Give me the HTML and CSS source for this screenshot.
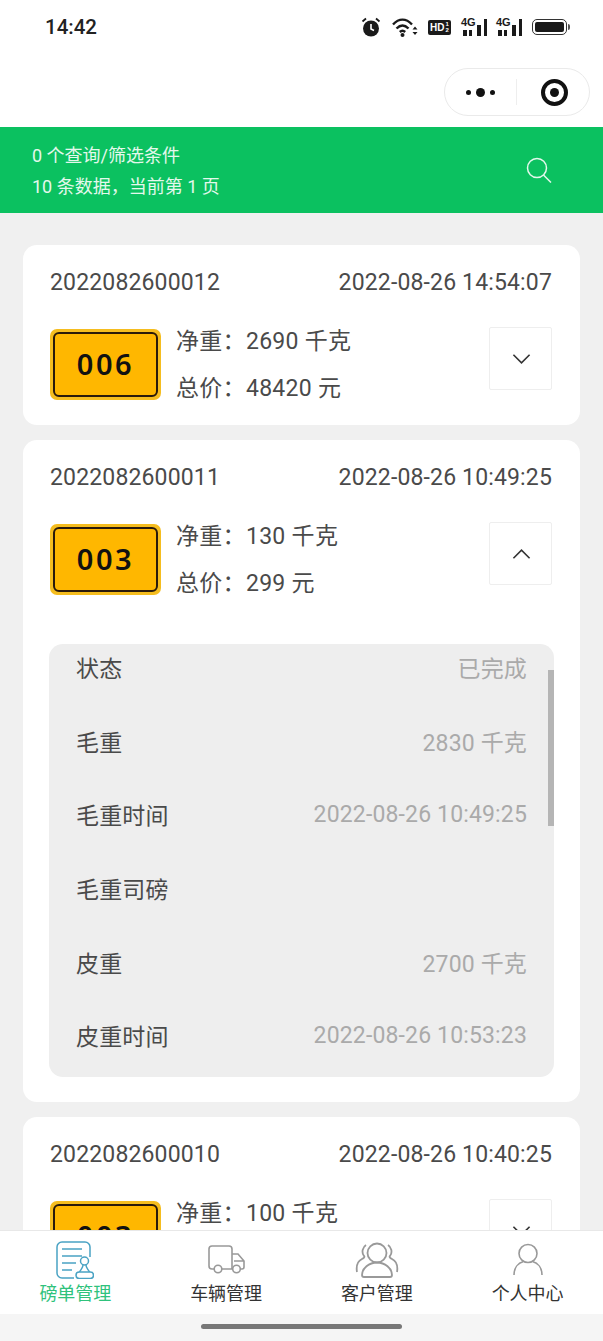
FILE: index.html
```html
<!DOCTYPE html>
<html lang="zh-CN">
<head>
    <meta charset="UTF-8">
    <meta name="viewport" content="width=device-width, initial-scale=1.0">
    <title>磅单管理</title>
    <link rel="stylesheet" href="styles.css">
</head>
<body>
<div class="app">
    <div class="status-bar">
        <span class="clock">14:42</span>
        <div class="status-icons">
            <svg class="ic-alarm" viewBox="0 0 20 20"><circle cx="10" cy="11.500" r="8" fill="#1a1a1a"/><path d="M10 7v5l3 1.500" stroke="#fff" stroke-width="1.600" fill="none"/><path d="M1.500 4.500 5 1.500M18.500 4.500 15 1.500" stroke="#1a1a1a" stroke-width="1.800"/></svg>
            <svg class="ic-wifi" viewBox="0 0 26 20"><g fill="none" stroke="#1a1a1a" stroke-width="2.400"><path d="M1 7.500c6-6.500 13-6.500 19 0"/><path d="M4.500 11.500c4-4 8-4 12 0"/><path d="M7.800 15c2-1.800 3.400-1.800 5.400 0"/></g><circle cx="10.500" cy="18" r="2" fill="#1a1a1a"/><path d="M20.500 12.500h5l-2.500-3zM20.500 15h5l-2.500 3z" fill="#1a1a1a"/></svg>
            <span class="ic-hd">HD<span class="hd-frac">1<br>2</span></span>
            <div class="signal"><em>4G</em><i class="b1"></i><i class="b2"></i><i class="b3"></i><i class="b4"></i></div>
            <div class="signal"><em>4G</em><i class="b1"></i><i class="b2"></i><i class="b3"></i><i class="b4"></i></div>
            <div class="battery"><b></b></div>
            <div class="battery-tip"></div>
        </div>
    </div>

    <div class="nav-bar">
        <div class="capsule">
            <div class="capsule-dots"><i></i><i class="big"></i><i></i></div>
            <div class="capsule-line"></div>
            <div class="capsule-target"><i></i></div>
        </div>
    </div>

    <div class="filter-bar">
        <div class="filter-text">
            <p>0 个查询/筛选条件</p>
            <p>10 条数据，当前第 1 页</p>
        </div>
        <svg class="ic-search" viewBox="0 0 26 26"><circle cx="11" cy="11" r="9.500" fill="none" stroke="#e4f8ec" stroke-width="1.500"/><path d="M17.500 18 25 25.500" stroke="#e4f8ec" stroke-width="1.500"/></svg>
    </div>

    <div class="list">
        <div class="card">
            <div class="card-head"><span>2022082600012</span><span>2022-08-26 14:54:07</span></div>
            <div class="card-body">
                <div class="plate"><div class="plate-inner">006</div></div>
                <div class="weights">
                    <p>净重：2690 千克</p>
                    <p>总价：48420 元</p>
                </div>
                <div class="toggle"><svg viewBox="0 0 20 12"><path d="M1.500 1.500 10 10l8.500-8.500" fill="none" stroke="#333" stroke-width="1.700"/></svg></div>
            </div>
        </div>

        <div class="card">
            <div class="card-head"><span>2022082600011</span><span>2022-08-26 10:49:25</span></div>
            <div class="card-body">
                <div class="plate"><div class="plate-inner">003</div></div>
                <div class="weights">
                    <p>净重：130 千克</p>
                    <p>总价：299 元</p>
                </div>
                <div class="toggle"><svg viewBox="0 0 20 12"><path d="M1.500 10.500 10 2l8.500 8.500" fill="none" stroke="#333" stroke-width="1.700"/></svg></div>
            </div>
            <div class="detail">
                <div class="detail-rows">
                    <div class="row"><span>状态</span><span class="val">已完成</span></div>
                    <div class="row"><span>毛重</span><span class="val">2830 千克</span></div>
                    <div class="row"><span>毛重时间</span><span class="val">2022-08-26 10:49:25</span></div>
                    <div class="row"><span>毛重司磅</span><span class="val"></span></div>
                    <div class="row"><span>皮重</span><span class="val">2700 千克</span></div>
                    <div class="row"><span>皮重时间</span><span class="val">2022-08-26 10:53:23</span></div>
                </div>
                <div class="scroll-thumb"></div>
            </div>
        </div>

        <div class="card">
            <div class="card-head"><span>2022082600010</span><span>2022-08-26 10:40:25</span></div>
            <div class="card-body">
                <div class="plate"><div class="plate-inner">003</div></div>
                <div class="weights">
                    <p>净重：100 千克</p>
                </div>
                <div class="toggle"><svg viewBox="0 0 20 12"><path d="M1.500 1.500 10 10l8.500-8.500" fill="none" stroke="#333" stroke-width="1.700"/></svg></div>
            </div>
        </div>
    </div>

    <div class="tabbar">
        <div class="tab active">
            <svg viewBox="0 0 38 38"><g fill="none" stroke="#4aa3c4" stroke-width="1.500"><path d="M18 37H6a5 5 0 0 1-5-5V6a5 5 0 0 1 5-5h23a5 5 0 0 1 5 5v10"/><path d="M6 8h20M6 15h20M6 22h14M6 29h10"/><circle cx="28.500" cy="20" r="4"/><path d="M27 24c0 3-2 4-3.500 7M30 24c0 3 2 4 3.500 7"/><rect x="20" y="31" width="17.500" height="6.500" rx="3.200"/></g></svg>
            <span>磅单管理</span>
        </div>
        <div class="tab">
            <svg viewBox="0 0 38 38"><g fill="none" stroke="#999" stroke-width="1.600"><path d="M7 28H5a3 3 0 0 1-3-3V8a3 3 0 0 1 3-3h17a3 3 0 0 1 3 3v20H15"/><path d="M25 13h6l6 7v6a2 2 0 0 1-2 2h-2M25 28h1M27 20h10"/><circle cx="11" cy="28" r="3.800"/><circle cx="29.500" cy="28" r="3.800"/></g></svg>
            <span>车辆管理</span>
        </div>
        <div class="tab">
            <svg class="wide" viewBox="0 0 44 38"><g fill="none" stroke="#999" stroke-width="1.800"><circle cx="22" cy="12" r="9.500"/><path d="M22 21.500c-8 0-15 6-15 12.500q0 2 2 2h26q2 0 2-2c0-6.500-7-12.500-15-12.500z"/><path d="M11 4c-3 2-5 7-2 11 1 1 0 2-2 3-4 2-6 7-5 13"/><path d="M33 4c3 2 5 7 2 11-1 1 0 2 2 3 4 2 6 7 5 13"/></g></svg>
            <span>客户管理</span>
        </div>
        <div class="tab">
            <svg viewBox="0 0 38 38"><g fill="none" stroke="#999" stroke-width="1.600"><circle cx="19" cy="12.500" r="9"/><path d="M5 34c0-7 4-12 9.500-13.500M33 34c0-7-4-12-9.500-13.500"/></g></svg>
            <span>个人中心</span>
        </div>
    </div>

    <div class="home-area"><div class="home-bar"></div></div>
</div>
</body>
</html>
```

FILE: styles.css
```css
* {
    box-sizing: border-box;
}
html, body {
    margin: 0;
    padding: 0;
}
body {
    font-family: Roboto, "Noto Sans CJK SC", sans-serif;
    color: #4a4a4a;
    background-color: #f0f0f0;
}
p {
    margin: 0;
}
.app {
    width: 603px;
    height: 1341px;
    display: flex;
    flex-direction: column;
    overflow: hidden;
}

/* status bar */
.status-bar {
    height: 54px;
    flex: none;
    background-color: #fff;
    display: flex;
    justify-content: space-between;
    align-items: center;
    padding: 0 33px 0 45px;
}
.clock {
    font-size: 20.500px;
    font-weight: 500;
    color: #222;
}
.status-icons {
    display: flex;
    align-items: center;
}
.ic-alarm {
    width: 20px;
    height: 20px;
    margin-right: 11px;
}
.ic-wifi {
    width: 26px;
    height: 20px;
    margin-right: 10px;
}
.ic-hd {
    width: 23px;
    height: 15px;
    margin-right: 10px;
    background-color: #1a1a1a;
    border-radius: 2px;
    color: #fff;
    font: bold 10px/15px "Liberation Sans", sans-serif;
    display: flex;
    justify-content: center;
}
.hd-frac {
    font-size: 6px;
    line-height: 6.500px;
    margin-left: 1px;
    padding-top: 1px;
}
.signal {
    width: 27px;
    height: 18px;
    margin-right: 8px;
    display: flex;
    align-items: flex-end;
    position: relative;
}
.signal em {
    position: absolute;
    left: 0;
    top: -1px;
    font: bold 11px/10px "Liberation Sans Narrow", "Liberation Sans", sans-serif;
    color: #1a1a1a;
}
.signal i {
    width: 3.500px;
    background-color: #1a1a1a;
}
.signal .b1 { height: 6px; margin-left: 2px; }
.signal .b2 { height: 6px; margin-left: 2px; }
.signal .b3 { height: 11px; margin-left: 5px; }
.signal .b4 { height: 17px; margin-left: 3px; }
.battery {
    width: 35px;
    height: 16px;
    border: 1.500px solid #333;
    border-radius: 5px;
    padding: 2px;
    margin-left: 1px;
}
.battery b {
    display: block;
    height: 100%;
    background-color: #1a1a1a;
    border-radius: 2px;
}
.battery-tip {
    width: 2px;
    height: 6px;
    margin-left: 1px;
    background-color: #555;
    border-radius: 0 2px 2px 0;
}

/* capsule */
.nav-bar {
    height: 73px;
    flex: none;
    background-color: #fff;
    display: flex;
    justify-content: flex-end;
    padding: 14px 13px 0 0;
}
.capsule {
    width: 146px;
    height: 48px;
    border: 1px solid #eaeaea;
    border-radius: 24px;
    display: flex;
    align-items: center;
}
.capsule-dots {
    width: 71px;
    display: flex;
    justify-content: center;
    align-items: center;
    gap: 5px;
}
.capsule-dots i {
    width: 5px;
    height: 5px;
    border-radius: 50%;
    background-color: #111;
}
.capsule-dots .big {
    width: 9px;
    height: 9px;
}
.capsule-line {
    width: 1px;
    height: 26px;
    background-color: #eee;
}
.capsule-target {
    width: 27px;
    height: 27px;
    margin-left: 24px;
    border: 4px solid #111;
    border-radius: 50%;
    display: flex;
    justify-content: center;
    align-items: center;
}
.capsule-target i {
    width: 9px;
    height: 9px;
    border-radius: 50%;
    background-color: #111;
}

/* green filter bar */
.filter-bar {
    height: 86px;
    flex: none;
    background-color: #0bc160;
    display: flex;
    justify-content: space-between;
    align-items: center;
    padding: 2px 51px 0 32px;
    color: #e4f8ec;
    font-size: 18px;
    line-height: 31px;
}
.ic-search {
    width: 26px;
    height: 26px;
    margin-top: -2px;
}

/* cards */
.list {
    flex: 1;
    min-height: 0;
    overflow: hidden;
    padding: 32px 23px 0;
}
.card {
    background-color: #fff;
    border-radius: 14px;
    padding: 21px 28px 14px 27px;
    margin-bottom: 15px;
}
.card-head {
    display: flex;
    justify-content: space-between;
    padding-top: 1px;
    height: 32px;
    font-size: 23px;
    line-height: 32px;
    letter-spacing: 0.150px;
}
.card-body {
    display: flex;
    align-items: center;
    margin-top: 19px;
}
.plate {
    width: 111px;
    height: 71px;
    flex: none;
    background-color: #f5bd1f;
    border-radius: 7px;
    padding: 3px;
}
.plate-inner {
    height: 100%;
    background-color: #ffb700;
    border: 2px solid #2a1a0a;
    border-radius: 6px;
    padding-bottom: 2px;
    color: #111;
    font-family: "Noto Sans", sans-serif;
    font-size: 29px;
    font-weight: 600;
    letter-spacing: 2.500px;
    display: flex;
    justify-content: center;
    align-items: center;
}
.weights {
    flex: 1;
    height: 94px;
    margin-left: 15px;
    padding-top: 1px;
    font-size: 23px;
    line-height: 47px;
    letter-spacing: 0.300px;
}
.toggle {
    width: 63px;
    height: 63px;
    flex: none;
    align-self: flex-start;
    margin-top: 10px;
    padding-left: 1px;
    border: 1px solid #eee;
    border-radius: 2px;
    display: flex;
    justify-content: center;
    align-items: center;
}
.toggle svg {
    width: 19px;
    height: 12px;
}

/* expanded detail, scrolled a little */
.detail {
    height: 433px;
    margin: 38px -2px 11px -1px;
    background-color: #eee;
    border-radius: 14px;
    overflow: hidden;
    position: relative;
}
.detail-rows {
    margin-top: -14px;
    padding: 0 27px;
    font-size: 23px;
    letter-spacing: 0.150px;
}
.row {
    height: 73.700px;
    display: flex;
    justify-content: space-between;
    align-items: center;
}
.val {
    color: #aaa;
}
.scroll-thumb {
    position: absolute;
    right: 0;
    top: 26px;
    width: 6px;
    height: 156px;
    background-color: #b5b5b5;
}

/* bottom tabs */
.tabbar {
    height: 84px;
    flex: none;
    background-color: #fff;
    border-top: 1px solid #e8e8e8;
    display: flex;
}
.tab {
    flex: 1;
    display: flex;
    flex-direction: column;
    align-items: center;
    padding-top: 10px;
    font-size: 18px;
    line-height: 24px;
    color: #333;
}
.tab svg {
    width: 38px;
    height: 38px;
    margin-bottom: 3px;
}
.tab svg.wide {
    width: 44px;
}
.tab.active span {
    color: #2fc27c;
}
.home-area {
    flex: none;
    height: 27px;
    background-color: #f5f5f5;
    display: flex;
    justify-content: center;
    padding-top: 10px;
}
.home-bar {
    width: 201px;
    height: 5px;
    border-radius: 3px;
    background-color: #777;
}
```
